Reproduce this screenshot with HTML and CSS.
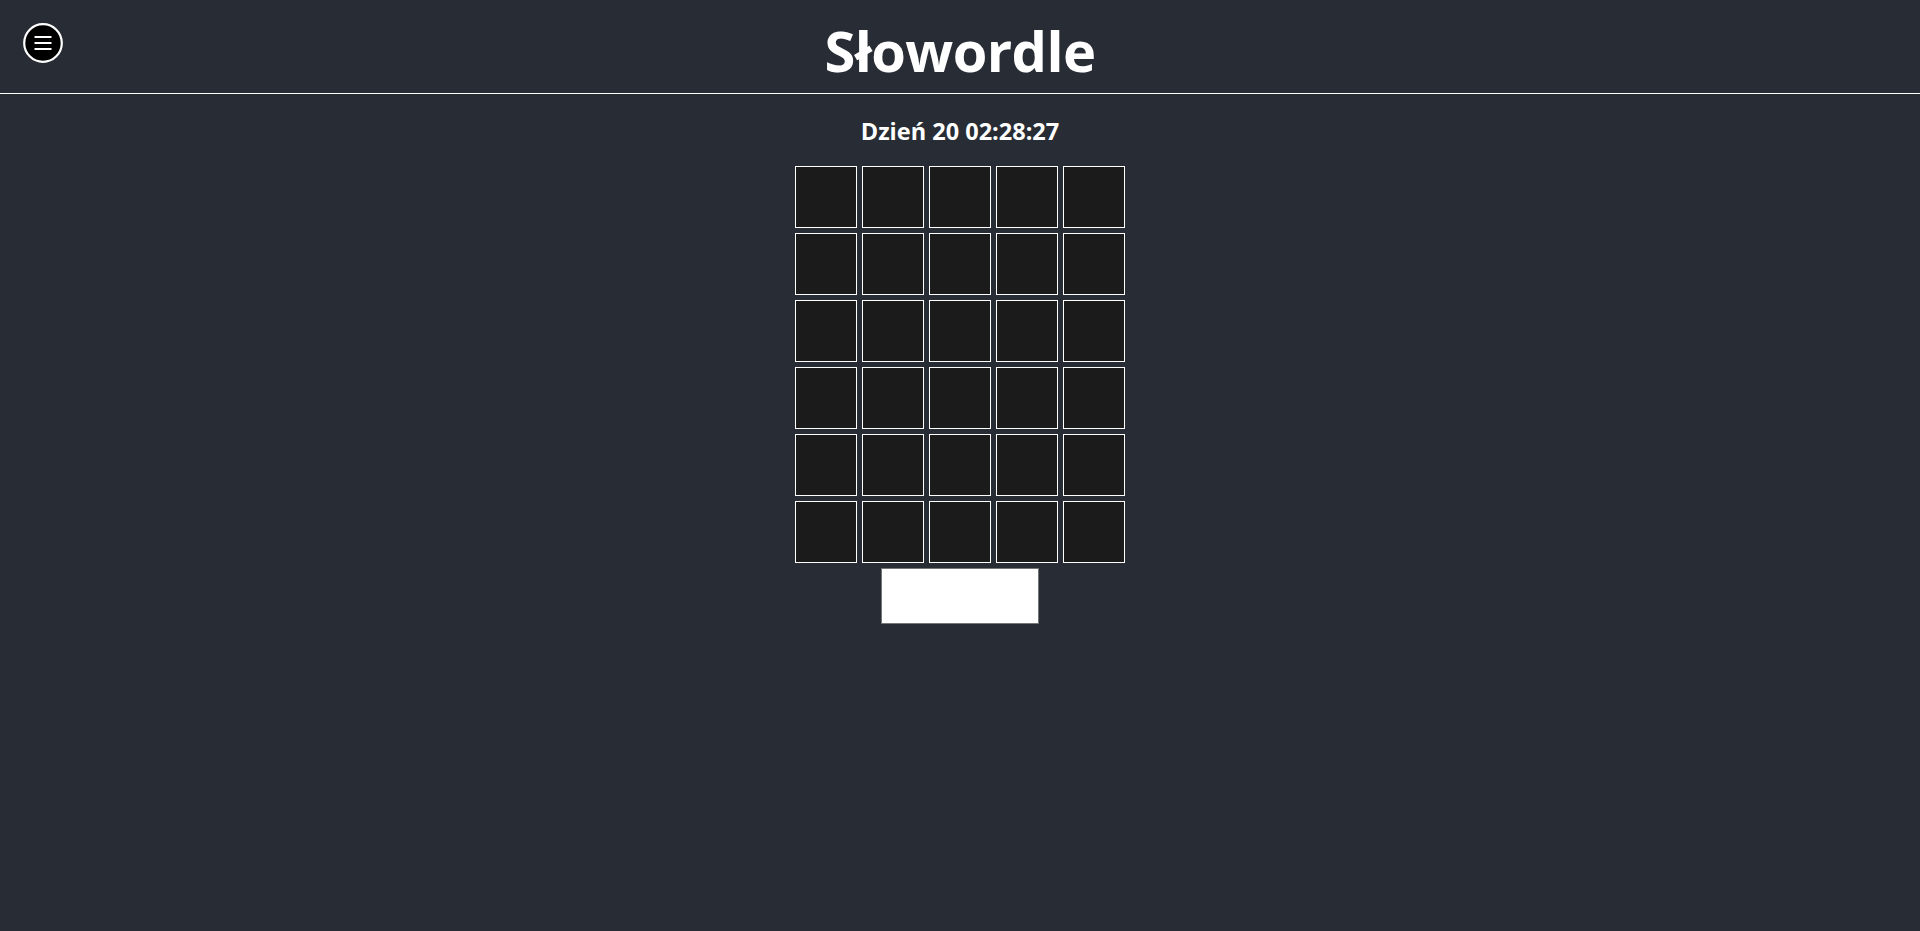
FILE: index.html
```html
<!DOCTYPE html>
<html lang="pl">
<head>
<meta charset="utf-8">
<title>Słowordle</title>
<link rel="stylesheet" href="styles.css">
</head>
<body>
<header class="topbar">
  <div class="topbar-side">
    <button class="menu-btn" aria-label="Menu">
      <svg width="40" height="40" viewBox="0 0 40 40">
        <circle cx="20" cy="20" r="18.8" fill="#000" stroke="#fff" stroke-width="2.2"/>
        <path d="M11.5 14h17M11.5 20h17M11.5 26h17" stroke="#fff" stroke-width="2" stroke-linecap="butt"/>
      </svg>
    </button>
  </div>
  <h1 class="title">Słowordle</h1>
  <div class="topbar-side"></div>
</header>
<main class="game">
  <div class="day">Dzień 20 02:28:27</div>
  <div class="board">
    <div class="cell"></div><div class="cell"></div><div class="cell"></div><div class="cell"></div><div class="cell"></div>
    <div class="cell"></div><div class="cell"></div><div class="cell"></div><div class="cell"></div><div class="cell"></div>
    <div class="cell"></div><div class="cell"></div><div class="cell"></div><div class="cell"></div><div class="cell"></div>
    <div class="cell"></div><div class="cell"></div><div class="cell"></div><div class="cell"></div><div class="cell"></div>
    <div class="cell"></div><div class="cell"></div><div class="cell"></div><div class="cell"></div><div class="cell"></div>
    <div class="cell"></div><div class="cell"></div><div class="cell"></div><div class="cell"></div><div class="cell"></div>
  </div>
  <input class="guess" type="text" aria-label="Słowo">
</main>
</body>
</html>
```

FILE: styles.css
```css
html, body {
  margin: 0;
  padding: 0;
}
body {
  background: #282c34;
  color: #fff;
  font-family: "Open Sans", "Noto Sans", sans-serif;
  min-height: 931px;
}
.topbar {
  height: 93px;
  border-bottom: 1px solid #fff;
  display: grid;
  grid-template-columns: 1fr auto 1fr;
  align-items: start;
}
.topbar-side {
  display: flex;
}
.menu-btn {
  margin: 23px 0 0 23px;
  padding: 0;
  border: 0;
  background: none;
  width: 40px;
  height: 40px;
  display: block;
  cursor: pointer;
}
.menu-btn svg {
  display: block;
}
.title {
  margin: 0;
  padding-top: 12px;
  font-size: 56px;
  line-height: 76px;
  font-weight: 700;
  letter-spacing: -0.6px;
}
.game {
  display: flex;
  flex-direction: column;
  align-items: center;
}
.day {
  margin-top: 21px;
  font-size: 23.5px;
  line-height: 33px;
  font-weight: 700;
}
.board {
  margin-top: 18px;
  display: grid;
  grid-template-columns: repeat(5, 62px);
  grid-auto-rows: 62px;
  gap: 5px;
}
.cell {
  box-sizing: border-box;
  border: 1px solid #fff;
  background: #1b1b1b;
}
.guess {
  box-sizing: border-box;
  margin-top: 5px;
  width: 158px;
  height: 56px;
  background: #fff;
  border: 1px solid #767676;
  padding: 0;
  font: inherit;
}
```
